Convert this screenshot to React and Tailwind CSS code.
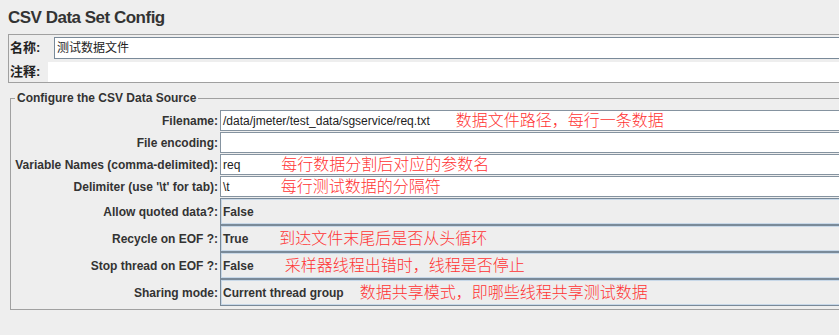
import React from "react";

const F = { fontFamily: '"Liberation Sans", "Noto Sans CJK SC", sans-serif' };

function TextRow({ label, value, note, noteLeft }) {
  return (
    <div className="flex items-center h-[21px] mb-[1px]">
      <div className="w-[209px] pr-[2px] text-right text-[12px] font-bold text-[#333333] whitespace-nowrap">{label}</div>
      <div className="flex-1 h-[21px] bg-white border border-[#8593a0] border-r-0 flex items-center pl-[2px] text-[12px] text-[#222222] whitespace-nowrap overflow-hidden">
        <span className="shrink-0">{value}</span>
        {note && (
          <span className="text-[16px] font-light text-[#ff3333] shrink-0" style={{ marginLeft: noteLeft }}>{note}</span>
        )}
      </div>
    </div>
  );
}

function ComboRow({ label, value, note, noteLeft }) {
  return (
    <div className="flex items-center h-[27px]">
      <div className="w-[209px] pr-[2px] text-right text-[12px] font-bold text-[#333333] whitespace-nowrap">{label}</div>
      <div className="flex-1 h-[27px] bg-[#eeeeee] border border-[#7a8a99] border-r-0 shadow-[inset_1px_1px_0_#c8d8e8,inset_0_-1px_0_#c8d8e8] flex items-center pl-[2px] text-[12px] font-bold text-[#333333] whitespace-nowrap overflow-hidden">
        <span className="shrink-0">{value}</span>
        {note && (
          <span className="text-[16px] font-light text-[#ff3333] shrink-0" style={{ marginLeft: noteLeft }}>{note}</span>
        )}
      </div>
    </div>
  );
}

export default function App() {
  return (
    <div className="w-[839px] h-[335px] bg-[#eeeeee] overflow-hidden" style={F}>
      <div className="pl-[8px] pt-[8px] h-[34px] text-[17px] font-bold leading-[20px] tracking-[-0.5px] text-[#333333]">CSV Data Set Config</div>
      <div className="ml-[8px] h-[49px] border border-[#a0a0a0] border-r-0 pt-[2px]">
        <div className="flex items-center h-[22px]">
          <div className="w-[45px] pl-[1px] text-[13px] font-bold text-[#222222]">名称:</div>
          <div className="flex-1 h-[22px] bg-white border border-[#7a8a99] border-r-0 flex items-center pl-[2px] text-[12px] text-[#222222]">测试数据文件</div>
        </div>
        <div className="flex items-center h-[20px] mt-[3px]">
          <div className="w-[39px] pl-[1px] text-[13px] font-bold text-[#222222]">注释:</div>
          <div className="flex-1 h-[20px] bg-white"></div>
        </div>
      </div>
      <fieldset className="ml-[10px] mt-[8px] border border-[#a0a0a0] border-r-0 pb-[3px] pt-[5px] px-0">
        <legend className="ml-[4px] px-[2px] text-[12px] font-bold text-[#333333] leading-[14px]">Configure the CSV Data Source</legend>
        <TextRow label="Filename:" value="/data/jmeter/test_data/sgservice/req.txt" note="数据文件路径，每行一条数据" noteLeft="26px" />
        <TextRow label="File encoding:" value="" />
        <TextRow label="Variable Names (comma-delimited):" value="req" note="每行数据分割后对应的参数名" noteLeft="41px" />
        <TextRow label="Delimiter (use '\t' for tab):" value="\t" note="每行测试数据的分隔符" noteLeft="51px" />
        <ComboRow label="Allow quoted data?:" value="False" />
        <ComboRow label="Recycle on EOF ?:" value="True" note="到达文件末尾后是否从头循环" noteLeft="31px" />
        <ComboRow label="Stop thread on EOF ?:" value="False" note="采样器线程出错时，线程是否停止" noteLeft="31px" />
        <ComboRow label="Sharing mode:" value="Current thread group" note="数据共享模式，即哪些线程共享测试数据" noteLeft="16px" />
      </fieldset>
    </div>
  );
}
